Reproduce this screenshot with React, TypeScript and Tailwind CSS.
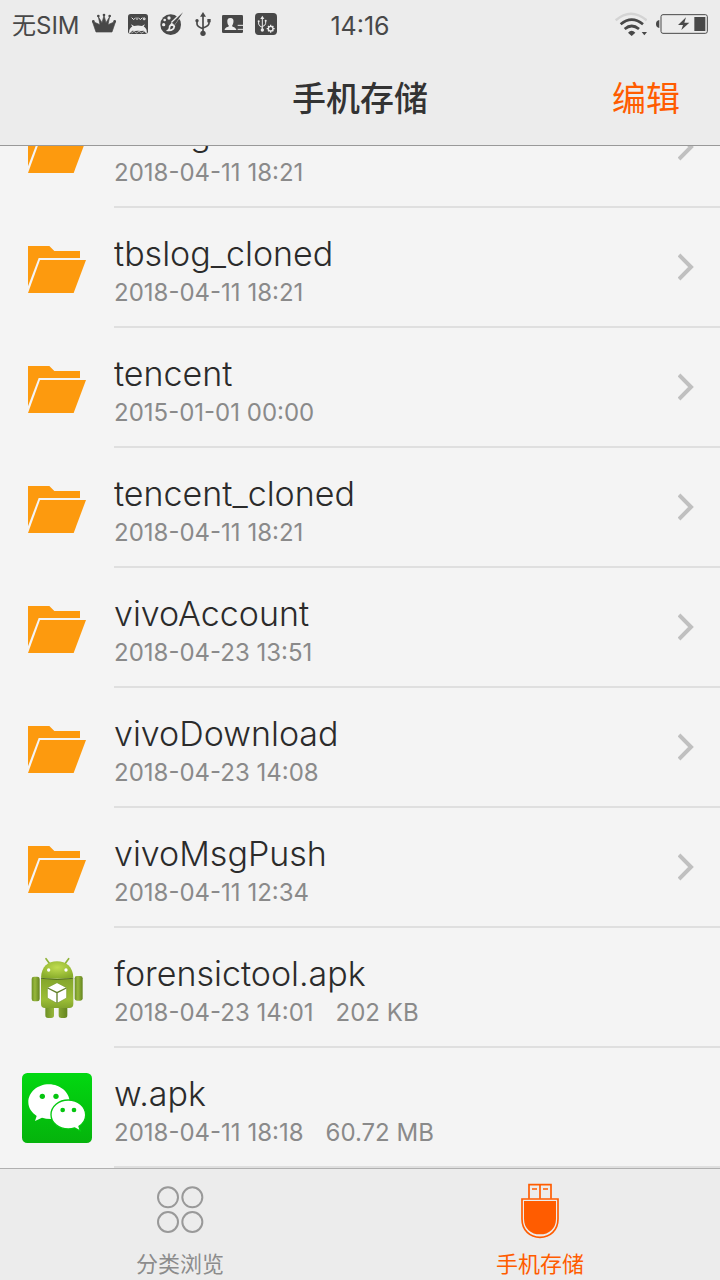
import React from "react";

type Kind = "folder" | "android" | "wechat";

interface Entry {
  name: string;
  date: string;
  size?: string;
  kind: Kind;
}

const entries: Entry[] = [
  { name: "tbslog", date: "2018-04-11 18:21", kind: "folder" },
  { name: "tbslog_cloned", date: "2018-04-11 18:21", kind: "folder" },
  { name: "tencent", date: "2015-01-01 00:00", kind: "folder" },
  { name: "tencent_cloned", date: "2018-04-11 18:21", kind: "folder" },
  { name: "vivoAccount", date: "2018-04-23 13:51", kind: "folder" },
  { name: "vivoDownload", date: "2018-04-23 14:08", kind: "folder" },
  { name: "vivoMsgPush", date: "2018-04-11 12:34", kind: "folder" },
  { name: "forensictool.apk", date: "2018-04-23 14:01", size: "202 KB", kind: "android" },
  { name: "w.apk", date: "2018-04-11 18:18", size: "60.72 MB", kind: "wechat" },
];

function FolderIcon() {
  return (
    <svg className="size-[70px] shrink-0" viewBox="66 309 210 210" fill="#fd9a0e" aria-hidden="true">
      <path d="M84 348H148L163 363H240V384H116L84 469Z" />
      <path d="M120 390H258L221 489H84Z" />
    </svg>
  );
}

function AndroidIcon() {
  return (
    <svg className="size-[70px] shrink-0" viewBox="36 39 210 210" aria-hidden="true">
      <defs>
        <linearGradient id="droid" x1="0" y1="0" x2="0" y2="1">
          <stop offset="0" stopColor="#84a62c" />
          <stop offset="0.7" stopColor="#9cbe36" />
          <stop offset="1" stopColor="#82a42c" />
        </linearGradient>
        <linearGradient id="limb" x1="0" y1="0" x2="1" y2="0">
          <stop offset="0" stopColor="#6d9024" />
          <stop offset="0.4" stopColor="#98b83c" />
          <stop offset="1" stopColor="#64841f" />
        </linearGradient>
        <radialGradient id="head" cx="0.5" cy="0.35" r="0.65">
          <stop offset="0" stopColor="#c0dc50" />
          <stop offset="1" stopColor="#87ac2a" />
        </radialGradient>
      </defs>
      <path d="M108 56L119 71M176 56L165 71" stroke="#8fb338" strokeWidth="5" strokeLinecap="round" />
      <path d="M106 196H132V226Q132 234 124 234H114Q106 234 106 226ZM146 196H172V226Q172 234 164 234H154Q146 234 146 226Z" fill="url(#limb)" />
      <rect x="65" y="110" width="24" height="74" rx="7" fill="url(#limb)" />
      <rect x="194" y="108" width="24" height="74" rx="7" fill="url(#limb)" />
      <path d="M93 117H190V192Q190 204 178 204H105Q93 204 93 192Z" fill="url(#droid)" />
      <path d="M93 113C94 80 114 64 141 64S189 80 190 113Q141 120 93 113Z" fill="url(#head)" />
      <path d="M93 115Q141 122 190 115" stroke="#536e1d" strokeWidth="3" fill="none" />
      <circle cx="116" cy="90" r="5" fill="#fff" />
      <circle cx="168" cy="90" r="5" fill="#fff" />
      <path d="M141 128L170 143V174L141 190L112 174V143Z" fill="#fff" stroke="#7c9e2c" strokeWidth="2" />
      <path d="M113 144L141 158L169 144M141 158V189" fill="none" stroke="#62802a" strokeWidth="4" />
    </svg>
  );
}

function WeChatIcon() {
  return (
    <svg className="size-[70px] shrink-0" viewBox="36 399 210 210" aria-hidden="true">
      <defs>
        <linearGradient id="wechat" x1="0" y1="0" x2="0" y2="1">
          <stop offset="0" stopColor="#02d811" />
          <stop offset="1" stopColor="#05b30c" />
        </linearGradient>
      </defs>
      <rect x="36" y="399" width="210" height="210" rx="16" fill="url(#wechat)" />
      <path d="M117 433C82 433 55 457 55 487C55 504 65 518 80 528L75 543L96 533Q107 537 124 537C155 537 179 514 179 486S151 433 117 433Z" fill="#fff" />
      <path d="M175 480C203 480 227 499 227 525C227 539 219 551 207 559L211 573L194 564Q185 567 175 567C146 567 123 548 123 524S146 480 175 480Z" fill="#fff" stroke="#04c80f" strokeWidth="4" />
      <g fill="#04c50f">
        <circle cx="97" cy="469" r="8" />
        <circle cx="138" cy="469" r="8" />
        <circle cx="158" cy="510" r="7" />
        <circle cx="192" cy="510" r="7" />
      </g>
    </svg>
  );
}

const icons: Record<Kind, () => React.JSX.Element> = {
  folder: FolderIcon,
  android: AndroidIcon,
  wechat: WeChatIcon,
};

function StatusIcons() {
  return (
    <div className="flex items-center gap-3 text-[#484848]" aria-hidden="true">
      <svg className="h-6 w-6" viewBox="279 38 72 72" fill="currentColor">
        <path d="M291 98L280 66L303 76L298 52L309 70L315 48L321 70L332 52L327 76L350 66L339 98Z" stroke="currentColor" strokeWidth="2" />
        <circle cx="283" cy="66" r="4" />
        <circle cx="298" cy="50" r="4" />
        <circle cx="315" cy="47" r="4" />
        <circle cx="332" cy="50" r="4" />
        <circle cx="347" cy="66" r="4" />
      </svg>
      <svg className="h-6 w-5" viewBox="387 36 60 72">
        <rect x="387" y="42" width="60" height="60" rx="8" fill="currentColor" />
        <path d="M398 53L404 59L410 53M414 53V60M418 53L424 59L430 53M433 54H438V59H433Z" fill="none" stroke="#ececec" strokeWidth="3" />
        <path d="M391 101C389 91 393 82 400 80L396 73L405 78Q417 75 429 78L438 73L434 80C441 82 445 91 443 101L434 92L426 93L417 92L408 93L400 92Z" fill="#ececec" />
        <path d="M397 99L405 94L412 99L420 94L428 99L436 94" fill="none" stroke="#ececec" strokeWidth="2" />
      </svg>
      <svg className="h-6 w-6" viewBox="482 36 72 72">
        <circle cx="514" cy="74" r="31" fill="currentColor" />
        <g fill="#ececec">
          <circle cx="509" cy="54" r="5" />
          <circle cx="496" cy="60" r="4" />
          <circle cx="493" cy="74" r="5" />
        </g>
        <path d="M550 36L525 72L519 66Z" fill="currentColor" stroke="#ececec" strokeWidth="6" />
        <path d="M517 72L525 79Q523 92 506 91Q512 86 511 79Z" fill="currentColor" stroke="#ececec" strokeWidth="5" />
        <path d="M551 37L526 75L518 68Z" fill="currentColor" />
      </svg>
      <svg className="-mx-px h-6 w-4" viewBox="584 36 48 72" fill="none" stroke="currentColor" strokeWidth="5">
        <path d="M608 44V100M590 62V72Q590 80 608 86M626 62V70Q626 78 608 84" />
        <path d="M608 36L599 50H617Z" fill="currentColor" stroke="none" />
        <circle cx="608" cy="100" r="8" fill="currentColor" stroke="none" />
        <circle cx="590" cy="62" r="5" fill="currentColor" stroke="none" />
        <path d="M621 57H631V67H621Z" fill="currentColor" stroke="none" />
      </svg>
      <svg className="h-6 w-[21px]" viewBox="666 36 63 72">
        <rect x="666" y="45" width="63" height="54" rx="4" fill="currentColor" />
        <path d="M691 54C699 54 702 60 700 68C699 73 697 75 696 78C697 81 708 82 709 90H674C674 82 686 81 687 78C685 75 682 72 682 66C681 59 684 54 691 54Z" fill="#ececec" />
        <path d="M713 76H729M713 88H729" stroke="#ececec" strokeWidth="3" />
      </svg>
      <svg className="h-6 w-[22px]" viewBox="765 36 66 72">
        <rect x="765" y="39" width="66" height="66" rx="11" fill="currentColor" />
        <g fill="none" stroke="#ececec" strokeWidth="3">
          <path d="M787 52V90M776 64V72Q776 78 787 82M797 62V70Q797 76 787 80" />
          <path d="M787 47L781 57H793Z" fill="#ececec" stroke="none" />
          <circle cx="787" cy="90" r="5" fill="#ececec" stroke="none" />
          <circle cx="776" cy="64" r="3" fill="#ececec" stroke="none" />
          <circle cx="797" cy="62" r="3" fill="#ececec" stroke="none" />
          <circle cx="812" cy="86" r="7" strokeWidth="4" />
          <path d="M812 74V79M812 93V98M800 86H805M819 86H824M804 78L807 81M817 91L820 94M804 94L807 91M817 81L820 78" strokeWidth="4" />
        </g>
      </svg>
    </div>
  );
}

function SignalIcons() {
  return (
    <div className="flex items-center justify-end gap-2 text-[#484848]" aria-hidden="true">
      <svg className="h-6 w-8" viewBox="46 34 96 72" fill="none" strokeWidth="7">
        <path d="M48 59Q94 19 141 59" stroke="#d4d4d4" />
        <path d="M63 71Q96 43 130 71" stroke="currentColor" strokeWidth="8" />
        <path d="M75 85Q96 67 118 85" stroke="currentColor" strokeWidth="8" />
        <path d="M85 96Q96 85 107 96L96 106Z" fill="currentColor" />
        <path d="M126 94H142L134 104Z" fill="currentColor" />
      </svg>
      <svg className="h-6 w-[53px]" viewBox="164 36 159 72">
        <path d="M177 60V84Q167 82 167 72T177 60Z" fill="currentColor" />
        <rect x="182" y="44" width="139" height="56" rx="6" fill="none" stroke="currentColor" strokeWidth="3" />
        <rect x="282" y="51" width="33" height="42" fill="currentColor" />
        <path d="M257 52L233 75H248L243 90L267 68H252Z" fill="currentColor" />
      </svg>
    </div>
  );
}

function Chevron() {
  return (
    <svg className="h-7 w-4 shrink-0" viewBox="0 0 16 28" fill="none" stroke="#c0c0c0" strokeWidth="4" aria-hidden="true">
      <path d="M1 2L13 14L1 26" />
    </svg>
  );
}

function Row({ entry }: { entry: Entry }) {
  const Icon = icons[entry.kind];
  return (
    <li className="shrink-0">
      <button type="button" className="flex h-[120px] w-full items-stretch gap-[22px] pl-[22px] text-left">
        <span className="flex items-center">
          <Icon />
        </span>
        <span className="flex min-w-0 flex-1 items-center justify-between border-b-2 border-[#dfdfdf] pr-[26px]">
          <span className="flex min-w-0 flex-col pt-2">
            <span className="truncate text-[34px] leading-[44px] font-light text-[#2b2b2b]">{entry.name}</span>
            <span className="flex gap-[22px] text-[24px] leading-[34px] text-[#8a8a8a]">
              <span>{entry.date}</span>
              {entry.size && <span>{entry.size}</span>}
            </span>
          </span>
          {entry.kind === "folder" && <Chevron />}
        </span>
      </button>
    </li>
  );
}

export default function App() {
  return (
    <div className="flex h-screen flex-col bg-[#f4f4f4] font-['Inter','Noto_Sans_CJK_SC',sans-serif] font-normal">
      <header className="shrink-0 border-b border-[#999] bg-[#ececec]">
        <div className="grid h-12 grid-cols-[1fr_auto_1fr] items-center px-3 text-[#484848]">
          <div className="flex items-center gap-3">
            <span className="pt-1 text-[24px] leading-8">无SIM</span>
            <StatusIcons />
          </div>
          <time className="pt-1 text-[25px] leading-8">14:16</time>
          <SignalIcons />
        </div>
        <div className="grid h-[97px] grid-cols-[1fr_auto_1fr] items-center px-10 pt-[5px]">
          <h1 className="col-start-2 text-[34px] leading-12 font-medium text-[#333]">手机存储</h1>
          <button type="button" className="justify-self-end text-[34px] leading-12 text-[#ff5c00]">
            编辑
          </button>
        </div>
      </header>

      <main className="flex min-h-0 flex-1 flex-col justify-end overflow-hidden">
        <ul className="flex shrink-0 flex-col">
          {entries.map((entry) => (
            <Row key={entry.name} entry={entry} />
          ))}
        </ul>
      </main>

      <nav className="grid h-28 shrink-0 grid-cols-2 border-t border-[#b0b0b0] bg-[#ececec] text-[22px] leading-8">
        <button type="button" className="flex flex-col items-center justify-between pt-[11px] text-[#8c8c8c]">
          <svg className="h-[60px] w-12" viewBox="78 60 144 180" fill="none" stroke="#999" strokeWidth="6" aria-hidden="true">
            <circle cx="114" cy="112" r="30" />
            <circle cx="187" cy="112" r="30" />
            <circle cx="114" cy="186" r="30" />
            <circle cx="187" cy="186" r="30" />
          </svg>
          分类浏览
        </button>
        <button type="button" className="flex flex-col items-center justify-between pt-[11px] text-[#ff5c00]" aria-current="page">
          <svg className="h-[60px] w-12" viewBox="108 60 144 180" fill="none" stroke="#ff5c00" strokeWidth="5" aria-hidden="true">
            <path d="M147 116V74H213V116M180 74V116M156 87H171M189 87H204" />
            <path d="M126 117H234V177C234 211 210 232 180 232S126 211 126 177Z" />
            <path d="M132 123H228V176C228 206 207 223 180 223S132 206 132 176Z" fill="#ff5c00" stroke="none" />
          </svg>
          手机存储
        </button>
      </nav>
    </div>
  );
}
